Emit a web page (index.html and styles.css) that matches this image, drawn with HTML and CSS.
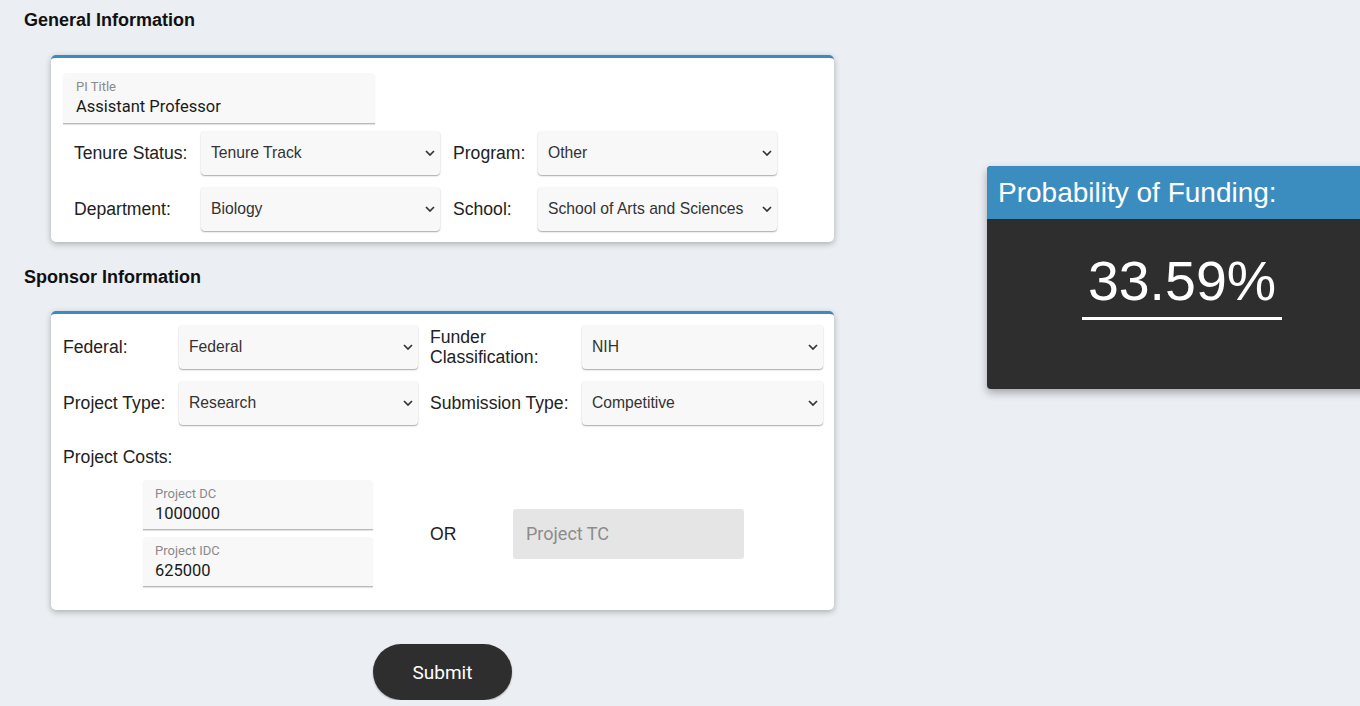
FILE: index.html
```html
<!DOCTYPE html>
<html>
<head>
<meta charset="utf-8">
<link rel="stylesheet" href="styles.css">
</head>
<body>
<div class="page">
  <div class="left">
    <h2 class="section-title first">General Information</h2>
    <div class="card card-general">
      <div class="text-field pi">
        <span class="tf-label">PI Title</span>
        <span class="tf-value">Assistant Professor</span>
      </div>
      <div class="grid grid-general">
        <div class="lbl">Tenure Status:</div>
        <div class="select"><span>Tenure Track</span><svg class="chev" width="10" height="6" viewBox="0 0 10 6"><path d="M1 1l4 4 4-4" fill="none" stroke="#333" stroke-width="1.7"/></svg></div>
        <div class="lbl lbl2">Program:</div>
        <div class="select"><span>Other</span><svg class="chev" width="10" height="6" viewBox="0 0 10 6"><path d="M1 1l4 4 4-4" fill="none" stroke="#333" stroke-width="1.7"/></svg></div>
        <div class="lbl">Department:</div>
        <div class="select"><span>Biology</span><svg class="chev" width="10" height="6" viewBox="0 0 10 6"><path d="M1 1l4 4 4-4" fill="none" stroke="#333" stroke-width="1.7"/></svg></div>
        <div class="lbl lbl2">School:</div>
        <div class="select"><span>School of Arts and Sciences</span><svg class="chev" width="10" height="6" viewBox="0 0 10 6"><path d="M1 1l4 4 4-4" fill="none" stroke="#333" stroke-width="1.7"/></svg></div>
      </div>
    </div>

    <h2 class="section-title second">Sponsor Information</h2>
    <div class="card card-sponsor">
      <div class="grid grid-sponsor">
        <div class="lbl">Federal:</div>
        <div class="select"><span>Federal</span><svg class="chev" width="10" height="6" viewBox="0 0 10 6"><path d="M1 1l4 4 4-4" fill="none" stroke="#333" stroke-width="1.7"/></svg></div>
        <div class="lbl lbl2 wrap">Funder Classification:</div>
        <div class="select"><span>NIH</span><svg class="chev" width="10" height="6" viewBox="0 0 10 6"><path d="M1 1l4 4 4-4" fill="none" stroke="#333" stroke-width="1.7"/></svg></div>
        <div class="lbl">Project Type:</div>
        <div class="select"><span>Research</span><svg class="chev" width="10" height="6" viewBox="0 0 10 6"><path d="M1 1l4 4 4-4" fill="none" stroke="#333" stroke-width="1.7"/></svg></div>
        <div class="lbl lbl2">Submission Type:</div>
        <div class="select"><span>Competitive</span><svg class="chev" width="10" height="6" viewBox="0 0 10 6"><path d="M1 1l4 4 4-4" fill="none" stroke="#333" stroke-width="1.7"/></svg></div>
      </div>
      <div class="lbl costs-label">Project Costs:</div>
      <div class="costs">
        <div class="cost-fields">
          <div class="text-field cost">
            <span class="tf-label">Project DC</span>
            <span class="tf-value">1000000</span>
          </div>
          <div class="text-field cost">
            <span class="tf-label">Project IDC</span>
            <span class="tf-value">625000</span>
          </div>
        </div>
        <div class="or">OR</div>
        <div class="tc-field">Project TC</div>
      </div>
    </div>

    <div class="submit-row">
      <button class="submit">Submit</button>
    </div>
  </div>

  <div class="result">
    <div class="result-head">Probability of Funding:</div>
    <div class="result-body">
      <span class="result-value">33.59%</span>
    </div>
  </div>
</div>
</body>
</html>
```

FILE: styles.css
```css
html, body {
  margin: 0;
  padding: 0;
  overflow: hidden;
}
body {
  background: #ebeef3;
  font-family: "Liberation Sans", Arial, sans-serif;
  color: #222;
}
.page {
  display: flex;
  align-items: flex-start;
  width: 1400px;
}
.left {
  width: 810px;
  padding-left: 24px;
  flex-shrink: 0;
}
.section-title {
  margin: 0;
  font-size: 18px;
  line-height: 20px;
  font-weight: bold;
  color: #111;
}
.section-title.first {
  padding-top: 10px;
  margin-bottom: 25px;
}
.section-title.second {
  margin-top: 25px;
  margin-bottom: 24px;
}
.card {
  margin-left: 27px;
  width: 783px;
  box-sizing: border-box;
  background: #fff;
  border-top: 3px solid #3a8cc0;
  border-radius: 5px;
  box-shadow: 0 2px 6px rgba(0, 0, 0, 0.28);
}
.card-general {
  height: 187px;
  padding: 15px 12px 0 12px;
}
.card-sponsor {
  height: 299px;
  padding: 11px 12px 0 12px;
}
.text-field {
  box-sizing: border-box;
  background: #f8f8f8;
  border-radius: 4px 4px 0 0;
  border-bottom: 1px solid #b8b8b8;
  box-shadow: 0 1px 1px rgba(0, 0, 0, 0.12);
  display: flex;
  flex-direction: column;
  font-family: Roboto, "Liberation Sans", sans-serif;
}
.text-field.pi {
  width: 312px;
  height: 51px;
  padding: 6px 13px 0 13px;
}
.tf-label {
  font-size: 13px;
  line-height: 15px;
  color: #8a8a8a;
}
.tf-value {
  font-size: 16.5px;
  line-height: 20px;
  margin-top: 3px;
  color: #1a1a1a;
}
.grid {
  display: grid;
  align-items: center;
}
.grid-general {
  margin-top: 7px;
  padding-left: 11px;
  grid-template-columns: 127px 239px 98px 239px;
  grid-auto-rows: 44px;
  row-gap: 12px;
}
.grid-sponsor {
  grid-template-columns: 116px 239px 164px 241px;
  grid-auto-rows: 44px;
  row-gap: 12px;
}
.lbl {
  font-size: 17.6px;
  line-height: 20px;
  color: #222;
}
.lbl2 {
  padding-left: 12px;
}
.grid-general .lbl2 {
  padding-left: 13px;
}
.wrap {
  padding-right: 20px;
}
.select {
  height: 44px;
  box-sizing: border-box;
  background: #f8f8f8;
  border-radius: 4px;
  box-shadow: 0 1px 1.5px rgba(0, 0, 0, 0.35);
  display: flex;
  align-items: center;
  justify-content: space-between;
  padding: 0 5px 0 10px;
  font-size: 15.7px;
  color: #333;
}
.chev {
  flex-shrink: 0;
}
.costs-label {
  margin-top: 22px;
}
.costs {
  display: flex;
  align-items: center;
  margin-top: 13px;
  padding-left: 80px;
}
.cost-fields {
  display: flex;
  flex-direction: column;
  gap: 7px;
}
.text-field.cost {
  width: 230px;
  height: 50px;
  padding: 6px 12px 0 12px;
}
.or {
  margin-left: 57px;
  font-size: 17.6px;
  line-height: 20px;
  width: 56px;
}
.tc-field {
  margin-left: 27px;
  width: 231px;
  height: 50px;
  box-sizing: border-box;
  background: #e5e5e5;
  border-radius: 3px;
  display: flex;
  align-items: center;
  padding-left: 13px;
  font-family: Roboto, "Liberation Sans", sans-serif;
  font-size: 18px;
  color: #8c8c8c;
}
.submit-row {
  margin-left: 27px;
  width: 783px;
  display: flex;
  justify-content: center;
  margin-top: 34px;
}
.submit {
  width: 139px;
  height: 56px;
  border: none;
  border-radius: 28px;
  background: #2e2e2e;
  color: #fff;
  font-family: Roboto, "Liberation Sans", sans-serif;
  font-size: 19px;
  box-shadow: 0 1px 2px rgba(0, 0, 0, 0.3);
}
.result {
  margin-left: 153px;
  margin-top: 166px;
  width: 390px;
  height: 223px;
  flex-shrink: 0;
  border-radius: 4px;
  overflow: hidden;
  background: #2e2e2e;
  box-shadow: 0 4px 8px rgba(0, 0, 0, 0.3);
  display: flex;
  flex-direction: column;
}
.result-head {
  height: 53px;
  background: #3b8dbf;
  color: #fff;
  font-size: 28px;
  line-height: 53px;
  padding-left: 11px;
}
.result-body {
  display: flex;
  justify-content: center;
  padding-top: 29px;
}
.result-value {
  color: #fff;
  font-size: 55.5px;
  line-height: 66px;
  padding: 0 6px 3px 6px;
  border-bottom: 3px solid #fff;
}
```
